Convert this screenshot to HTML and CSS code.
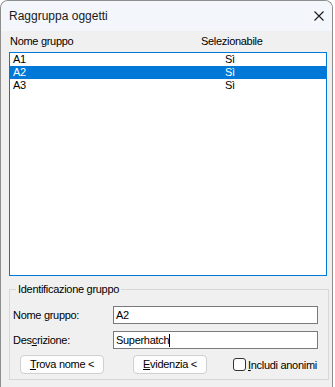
FILE: index.html
```html
<!doctype html>
<html lang="it">
	<head>
		<meta charset="UTF-8" />
		<title>Raggruppa oggetti</title>
		<link rel="stylesheet" href="styles.css">
	</head>
	<body>
		<div class="window">
			<div class="titlebar">
				<span class="title">Raggruppa oggetti</span>
				<svg class="close" width="10" height="10" viewBox="0 0 10 10">
					<path d="M0.5 0.5L9.5 9.5M9.5 0.5L0.5 9.5" stroke="#1b1b1b" stroke-width="1.1" fill="none"/>
				</svg>
			</div>
			<div class="cols">
				<span class="col-name">Nome <u>g</u>ruppo</span>
				<span>Selezionabile</span>
			</div>
			<div class="list">
				<div class="row"><span class="cell-name">A1</span><span>Sì</span></div>
				<div class="row active"><span class="cell-name">A2</span><span>Sì</span></div>
				<div class="row"><span class="cell-name">A3</span><span>Sì</span></div>
			</div>
			<fieldset class="group">
				<legend>Identificazione gruppo</legend>
				<div class="field first">
					<span class="label">Nome <u>g</u>ruppo:</span>
					<div class="edit">A2</div>
				</div>
				<div class="field">
					<span class="label">Des<u>c</u>rizione:</span>
					<div class="edit">Superhatch<span class="caret"></span></div>
				</div>
				<div class="buttons">
					<div class="btn find"><u>T</u>rova nome &lt;</div>
					<div class="btn show"><u>E</u>videnzia &lt;</div>
					<span class="check"></span>
					<span class="check-label"><u>I</u>ncludi anonimi</span>
				</div>
			</fieldset>
		</div>
	</body>
</html>
```
FILE: styles.css
```css
*{
	margin: 0;
	padding: 0;
	box-sizing: border-box;
}
body{
	background: #fff;
	font-family: "Liberation Sans", Arial, sans-serif;
	font-size: 11px;
	letter-spacing: -0.3px;
	color: #000;
}
.window{
	width: 333px;
	height: 400px;
	border: 1px solid #8d8d8d;
	border-bottom: none;
	border-radius: 8px 8px 0 0;
	background: #f0f0f0;
	overflow: hidden;
}
.titlebar{
	height: 30px;
	background: #f3f6fb;
	display: flex;
	align-items: center;
	justify-content: space-between;
	padding: 0 8px 0 8px;
}
.title{
	font-size: 12px;
	letter-spacing: 0;
	color: #1a1a1a;
}
.cols{
	display: flex;
	height: 13px;
	line-height: 13px;
	margin-top: 4px;
	padding-left: 9px;
}
.col-name{
	width: 191px;
}
.list{
	margin: 4px 0 0 8px;
	width: 318px;
	height: 224px;
	border: 1px solid #0078d7;
	background: #fff;
}
.row{
	display: flex;
	height: 13px;
	line-height: 13px;
	padding-left: 3px;
}
.row.active{
	background: #0078d7;
	color: #fff;
}
.cell-name{
	width: 212px;
}
.group{
	margin: 7px 0 0 8px;
	width: 320px;
	border: 1px solid #d7d7d7;
	padding: 0 0 5px 3px;
}
.group legend{
	margin-left: 3px;
	padding: 0 2px;
	line-height: 13px;
}
.field{
	display: flex;
	align-items: center;
	height: 18px;
	margin-top: 7px;
}
.field.first{
	margin-top: 10px;
}
.label{
	width: 100px;
}
.edit{
	width: 205px;
	height: 18px;
	border: 1px solid #7a7a7a;
	background: #fff;
	padding-left: 2px;
	line-height: 16px;
}
.caret{
	display: inline-block;
	width: 1px;
	height: 13px;
	background: #000;
	vertical-align: -3px;
}
.buttons{
	display: flex;
	align-items: center;
	height: 19px;
	margin-top: 6px;
}
.btn{
	height: 19px;
	line-height: 17px;
	border: 1px solid #d0d0d0;
	border-radius: 4px;
	background: #fdfdfd;
	text-align: center;
}
.btn.find{
	width: 84px;
	margin-left: 7px;
}
.btn.show{
	width: 74px;
	margin-left: 29px;
}
.check{
	width: 13px;
	height: 13px;
	margin-left: 26px;
	border: 1px solid #333;
	border-radius: 3px;
	background: #fff;
}
.check-label{
	margin-left: 2px;
}
```
